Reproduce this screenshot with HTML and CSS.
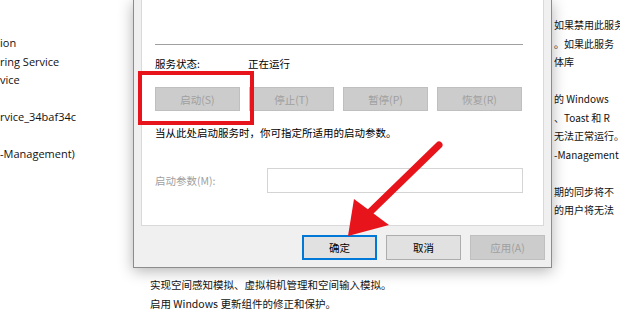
FILE: index.html
```html
<!DOCTYPE html>
<html lang="zh-CN">
<head>
  <meta charset="UTF-8" />
  <title>服务属性</title>
  <link rel="stylesheet" href="styles.css">
</head>
<body>

<div class="desk">

  <!-- service list, left part -->
  <div class="col col-left">
    <div class="ln">ion</div>
    <div class="ln">ring Service</div>
    <div class="ln">vice</div>
    <div class="ln"></div>
    <div class="ln">rvice_34baf34c</div>
    <div class="ln"></div>
    <div class="ln">-Management)</div>
  </div>

  <!-- properties dialog + list rows under it -->
  <div class="col col-mid">
    <div class="dialog">
      <div class="panel">
        <div class="sep"></div>
        <div class="status-row">
          <span class="status-lbl">服务状态:</span>
          <span>正在运行</span>
        </div>
        <div class="ctl-row">
          <span class="hl"><button class="btn" disabled>启动(S)</button></span>
          <button class="btn" disabled>停止(T)</button>
          <button class="btn" disabled>暂停(P)</button>
          <button class="btn" disabled>恢复(R)</button>
        </div>
        <p class="hint">当从此处启动服务时，你可指定所适用的启动参数。</p>
        <div class="param-row">
          <span class="param-lbl">启动参数(M):</span>
          <div class="param-input"></div>
        </div>
      </div>
      <div class="foot">
        <button class="btn btn-ok">确定</button>
        <button class="btn btn-on">取消</button>
        <button class="btn" disabled>应用(A)</button>
      </div>
    </div>
    <div class="under">
      <div class="ln">实现空间感知模拟、虚拟相机管理和空间输入模拟。</div>
      <div class="ln">启用 Windows 更新组件的修正和保护。</div>
    </div>
  </div>

  <!-- description column, right part -->
  <div class="col col-right">
    <div class="ln">如果禁用此服务</div>
    <div class="ln">。如果此服务</div>
    <div class="ln">体库</div>
    <div class="ln"></div>
    <div class="ln">的 Windows</div>
    <div class="ln">、Toast 和 R</div>
    <div class="ln">无法正常运行。</div>
    <div class="ln">-Management</div>
    <div class="ln"></div>
    <div class="ln">期的同步将不</div>
    <div class="ln">的用户将无法</div>
  </div>

  <!-- annotation arrow -->
  <svg class="arrow" width="620" height="309" viewBox="0 0 620 309">
    <line x1="439" y1="145" x2="368" y2="214" stroke="#e8141b" stroke-width="7" stroke-linecap="round"/>
    <polygon points="348,236 354,199 389,225" fill="#e8141b"/>
  </svg>
</div>

</body>
</html>
```

FILE: styles.css
```css
body {
  margin: 0;
  background: #fff;
  color: #111;
  overflow: hidden;
}

.desk {
  position: relative;
  display: flex;
  width: 620px;
  height: 309px;
  overflow: hidden;
}

.col .ln {
  height: 18.5px;
  line-height: 18.5px;
  white-space: nowrap;
}

.col-left {
  width: 133px;
  flex: none;
  padding-top: 34px;
  font-family: "Open Sans", "Noto Sans", sans-serif;
  font-size: 11px;
}

.col-mid {
  width: 419px;
  flex: none;
  position: relative;
  z-index: 2;
  font-family: "Noto Sans CJK SC", sans-serif;
  font-size: 10.5px;
}

.col-right {
  flex: 1;
  overflow: hidden;
  padding: 16px 0 0 2px;
  font-family: "Noto Sans CJK SC", sans-serif;
  font-size: 10px;
}

/* dialog */
.dialog {
  box-sizing: border-box;
  height: 268px;
  background: #f0f0f0;
  border: 1px solid #8c8c8c;
  border-top: none;
  box-shadow: 0 3px 14px rgba(0, 0, 0, 0.3);
  color: #000;
}

.panel {
  box-sizing: border-box;
  height: 226px;
  margin: 0 7px;
  padding: 0 20px 0 13px;
  background: #fff;
  border: 1px solid #d9d9d9;
  border-top: none;
  display: flex;
  flex-direction: column;
}

.sep {
  margin-top: 44px;
  border-top: 1px solid #a0a0a0;
}

.status-row {
  margin-top: 11px;
  display: flex;
  line-height: 16px;
}

.status-lbl {
  width: 93px;
}

.ctl-row {
  margin-top: 15px;
  display: flex;
  gap: 9px;
}

.ctl-row .btn {
  width: 85px;
  height: 24px;
}

.hl {
  position: relative;
  display: flex;
}

.hl::after {
  content: "";
  position: absolute;
  left: -17px;
  right: -14px;
  top: -16px;
  bottom: -14px;
  border: 4px solid #e8141b;
  z-index: 3;
}

.btn {
  box-sizing: border-box;
  width: 75px;
  height: 25px;
  padding: 0;
  background: #e1e1e1;
  border: 1px solid #adadad;
  font-family: "Noto Sans CJK SC", sans-serif;
  font-size: 10.5px;
  color: #000;
}

.btn:disabled {
  background: #cccccc;
  border-color: #bfbfbf;
  color: #9f9f9f;
}

.btn-ok {
  border: 2px solid #0078d7;
}

.hint {
  margin: 14px 0 0;
  line-height: 16px;
}

.param-row {
  margin-top: 27px;
  display: flex;
  align-items: center;
}

.param-lbl {
  width: 112px;
  color: #9f9f9f;
}

.param-input {
  flex: 1;
  height: 25px;
  box-sizing: border-box;
  border: 1px solid #d4d4d4;
  background: #fff;
}

.foot {
  display: flex;
  justify-content: flex-end;
  gap: 9px;
  margin-top: 9px;
  padding-right: 6px;
}

.under {
  padding: 8px 0 0 17px;
  color: #111;
}

.arrow {
  position: absolute;
  left: 0;
  top: 0;
  z-index: 5;
}
```
